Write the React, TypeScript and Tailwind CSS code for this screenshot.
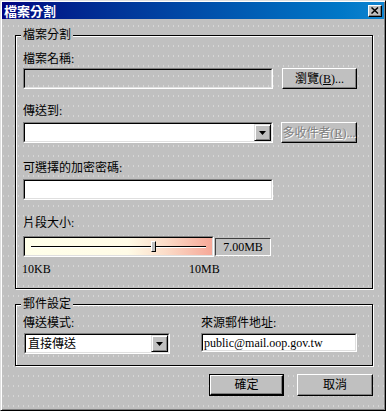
import React from "react";

const raised =
  "border border-t-white border-l-white border-r-black border-b-black shadow-[inset_-1px_-1px_0_#808080]";

function Sunken({ className = "", inner = "", children }: { className?: string; inner?: string; children?: React.ReactNode }) {
  return (
    <div className={"border border-t-[#808080] border-l-[#808080] border-r-white border-b-white " + className}>
      <div className={"h-full w-full border border-t-black border-l-black border-r-[#dfdfdf] border-b-[#dfdfdf] " + inner}>
        {children}
      </div>
    </div>
  );
}

function Arrow() {
  return (
    <svg width="7" height="4" viewBox="0 0 7 4">
      <path d="M0 0h7L3.5 4z" fill="#000" />
    </svg>
  );
}

function DropBtn() {
  return (
    <div className="w-[17px] h-full flex items-center justify-center bg-[#c0c0c0] border border-t-[#dfdfdf] border-l-[#dfdfdf] border-r-black border-b-black shadow-[inset_1px_1px_0_#fff,inset_-1px_-1px_0_#808080]">
      <Arrow />
    </div>
  );
}

function Button({ children, disabled = false, className = "" }: { children: React.ReactNode; disabled?: boolean; className?: string }) {
  return (
    <div
      className={
        "bg-[#c0c0c0] flex items-center justify-center text-[12px] leading-[14px] " +
        raised +
        " " +
        (disabled ? "text-[#808080] [text-shadow:1px_1px_0_#fff] " : "text-black ") +
        className
      }
    >
      {children}
    </div>
  );
}

export default function App() {
  return (
    <div className="w-[386px] h-[411px] bg-[#c0c0c0] bg-[radial-gradient(circle,#d6d6d6_0.5px,transparent_0.7px)] bg-[length:5px_10px] border border-t-[#dfdfdf] border-l-[#dfdfdf] border-r-black border-b-black shadow-[inset_1px_1px_0_#fff,inset_-1px_-1px_0_#808080] p-[1px] flex flex-col font-['Liberation_Serif','Noto_Sans_CJK_TC',serif] text-black text-[12px] leading-[14px] overflow-hidden">
      {/* Title bar */}
      <div className="h-[17px] flex items-center justify-between bg-gradient-to-r from-[#000080] to-[#1084d0] pl-[2px] pr-[2px]">
        <span className="text-white font-bold text-[13px] leading-[15px] font-['Noto_Sans_CJK_TC',sans-serif]">檔案分割</span>
        <div className={"w-[14px] h-[12px] bg-[#c0c0c0] flex items-center justify-center " + raised}>
          <svg width="8" height="7" viewBox="0 0 8 7">
            <path d="M0.5 0.5L7 6.5M7 0.5L0.5 6.5" stroke="#000" strokeWidth="1.5" />
          </svg>
        </div>
      </div>

      <div className="flex flex-col pl-[13px] pr-[11px]">
        {/* Group 1 */}
        <fieldset className="mt-[9px] border border-black shadow-[inset_1px_1px_0_#fff,1px_1px_0_#fff] pl-[7px] pr-[14px] pt-[10px] pb-[12px] min-w-0">
          <legend className="-ml-[2px] px-[2px] bg-[#c0c0c0] leading-[14px]">檔案分割</legend>
          <div>檔案名稱:</div>
          <div className="mt-[2px] flex gap-[9px]">
            <Sunken className="w-[250px] h-[21px]" />
            <Button className="w-[75px] h-[21px]">
              瀏覽(<u>B</u>)...
            </Button>
          </div>

          <div className="mt-[15px]">傳送到:</div>
          <div className="mt-[4px] flex gap-[8px]">
            <Sunken className="w-[250px] h-[21px]" inner="flex bg-white">
              <div className="flex-1" />
              <DropBtn />
            </Sunken>
            <Button disabled className="w-[76px] h-[21px]">
              多收件者(<u>R</u>)...
            </Button>
          </div>

          <div className="mt-[18px]">可選擇的加密密碼:</div>
          <Sunken className="mt-[4px] w-[250px] h-[21px]" inner="bg-white" />

          <div className="mt-[16px]">片段大小:</div>
          <div className="mt-[6px] flex items-center gap-[1px]">
            <Sunken
              className="w-[191px] h-[21px]"
              inner="bg-[linear-gradient(90deg,#ffffea_0%,#fffbe6_55%,#fbdcc8_75%,#f6a898_100%)] flex items-center px-[6px]"
            >
              <div className="relative flex-1 h-[2px] border-t border-black border-b border-b-white">
                <div className="absolute left-[120px] -top-[6px] w-[5px] h-[11px] bg-[#c0c0c0] border border-t-white border-l-white border-r-black border-b-black" />
              </div>
            </Sunken>
            <div className="w-[56px] h-[18px] flex items-center justify-center border border-t-[#404040] border-l-[#404040] border-r-white border-b-white bg-[#c0c0c0]">
              7.00MB
            </div>
          </div>
          <div className="mt-[5px] flex">
            <span className="w-[167px] -ml-[1px]">10KB</span>
            <span>10MB</span>
          </div>
        </fieldset>

        {/* Group 2 */}
        <fieldset className="mt-[8px] border border-black shadow-[inset_1px_1px_0_#fff,1px_1px_0_#fff] pl-[7px] pr-[14px] pt-[5px] pb-[11px] min-w-0">
          <legend className="-ml-[2px] px-[2px] bg-[#c0c0c0] leading-[14px]">郵件設定</legend>
          <div className="flex">
            <div className="w-[178px] flex flex-col">
              <div>傳送模式:</div>
              <Sunken className="mt-[3px] ml-[1px] w-[146px] h-[21px]" inner="flex bg-white">
                <div className="flex-1 flex items-center pl-[2px] text-[12px]">直接傳送</div>
                <DropBtn />
              </Sunken>
            </div>
            <div className="flex flex-col">
              <div>來源郵件地址:</div>
              <Sunken className="mt-[3px] w-[156px] h-[19px]" inner="bg-white flex items-center pl-[1px]">
                <span className="text-[12px] leading-[14px]">public@mail.oop.gov.tw</span>
              </Sunken>
            </div>
          </div>
        </fieldset>

        {/* Buttons */}
        <div className="mt-[8px] flex justify-end gap-[13px]">
          <div className="w-[75px] h-[22px] border border-black flex">
            <Button className="flex-1 h-full">確定</Button>
          </div>
          <Button className="w-[76px] h-[22px]">取消</Button>
        </div>
      </div>
    </div>
  );
}
